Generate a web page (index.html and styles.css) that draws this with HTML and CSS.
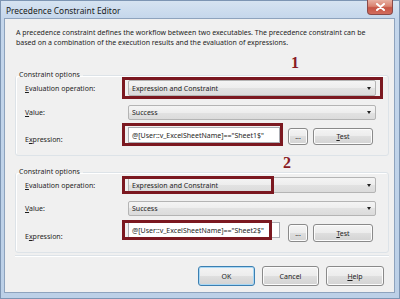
FILE: index.html
```html
<!DOCTYPE html>
<html>
<head>
<meta charset="utf-8">
<link rel="stylesheet" href="styles.css">
</head>
<body>
<div class="window">
  <div class="titlebar">
    <span class="title">Precedence Constraint Editor</span>
    <div class="close"><svg width="9" height="8" viewBox="0 0 9 8"><path d="M1 1 L8 7 M8 1 L1 7" stroke="#fff" stroke-width="2" stroke-linecap="round"/></svg></div>
  </div>
  <div class="client">
    <p class="desc">A precedence constraint defines the workflow between two executables. The precedence constraint can be<br>based on a combination of the execution results and the evaluation of expressions.</p>
    <div class="marker m1">1</div>
    <fieldset class="group">
      <legend>Constraint options</legend>
      <div class="rows">
        <div class="row r1">
          <span class="label"><u>E</u>valuation operation:</span>
          <div class="combo"><span>Expression and Constraint</span><i class="arrow"></i><div class="callout co-eval1"></div></div>
        </div>
        <div class="row r2">
          <span class="label"><u>V</u>alue:</span>
          <div class="combo"><span>Success</span><i class="arrow"></i></div>
        </div>
        <div class="row r3">
          <span class="label lbl-low">E<u>x</u>pression:</span>
          <div class="exprline">
            <div class="textbox">@[User::v_ExcelSheetName]=="Sheet1$"<div class="callout co-expr1"></div></div>
            <button class="btn dots">...</button>
            <button class="btn test"><u>T</u>est</button>
          </div>
        </div>
      </div>
    </fieldset>
    <div class="marker m2">2</div>
    <fieldset class="group g2">
      <legend>Constraint options</legend>
      <div class="rows">
        <div class="row r1">
          <span class="label"><u>E</u>valuation operation:</span>
          <div class="combo"><span>Expression and Constraint</span><i class="arrow"></i><div class="callout co-eval2"></div></div>
        </div>
        <div class="row r2 r2b">
          <span class="label"><u>V</u>alue:</span>
          <div class="combo"><span>Success</span><i class="arrow"></i></div>
        </div>
        <div class="row r3 r3b">
          <span class="label lbl-low">E<u>x</u>pression:</span>
          <div class="exprline">
            <div class="textbox">@[User::v_ExcelSheetName]=="Sheet2$"<div class="callout co-expr2"></div></div>
            <button class="btn dots">...</button>
            <button class="btn test"><u>T</u>est</button>
          </div>
        </div>
      </div>
    </fieldset>
    <div class="separator"></div>
    <div class="actions">
      <button class="btn action default">OK</button>
      <button class="btn action">Cancel</button>
      <button class="btn action help"><u>H</u>elp</button>
    </div>
  </div>
</div>
</body>
</html>
```

FILE: styles.css
```css
* { box-sizing: border-box; }
html, body { margin: 0; padding: 0; }
body { font-family: "Noto Sans", "Open Sans", sans-serif; color: #1e1e1e; }

.window {
  width: 400px;
  height: 299px;
  border: 1px solid #7d95b3;
  background: linear-gradient(#d6e3f1, #c4d6eb 18px, #bcd0e7);
  padding: 0 4px 5px 3px;
  display: flex;
  flex-direction: column;
}

.titlebar {
  height: 17px;
  display: flex;
  align-items: center;
}
.title {
  font-size: 8.4px;
  color: #1b1b1b;
  padding-left: 2px;
  margin-top: 1px;
}
.close {
  margin-left: auto;
  margin-right: 2px;
  align-self: flex-start;
  margin-top: -1px;
  width: 26px;
  height: 15px;
  border: 1px solid #8a4a48;
  border-top: none;
  border-radius: 0 0 4px 4px;
  background: linear-gradient(#e8b0a2, #d98270 45%, #c65444 55%, #d26d5e);
  display: flex;
  align-items: center;
  justify-content: center;
}

.client {
  flex: 1;
  background: #f0f0f0;
  border: 1px solid #8ea3bd;
  padding: 9px 5px 0 10px;
  display: flex;
  flex-direction: column;
  font-size: 7px;
}

.desc {
  margin: 0;
  padding-left: 1px;
  line-height: 10px;
  font-size: 7px;
  white-space: nowrap;
}

.marker {
  font-family: "Liberation Serif", serif;
  font-weight: bold;
  font-size: 16px;
  line-height: 11px;
  height: 11px;
  color: #8a1c24;
}
.m1 { margin-top: 9px; margin-left: 276px; }
.m2 { margin-top: 1px; margin-left: 268px; }

.group {
  margin: 2px 0 0 0;
  padding: 0;
  min-width: 0;
  border: 1px solid #dde3e8;
  border-radius: 3px;
  box-shadow: inset 1px 1px 0 #fff;
}
.g2 { margin-top: -1px; }
.group legend {
  padding: 0 3px;
  margin-left: 0;
  font-size: 7px;
  line-height: 10px;
}
.rows {
  padding: 0 12px 10px 9px;
  display: flex;
  flex-direction: column;
}
.g2 .rows { padding-bottom: 11px; }

.row {
  display: grid;
  grid-template-columns: 103px 1fr;
  align-items: center;
  height: 16px;
}
.r2 { margin-top: 9px; height: 15px; }
.r3 { margin-top: 7px; height: 18px; }
.r2b { margin-top: 8px; }
.r3b { margin-top: 6px; height: 19px; }

.label { white-space: nowrap; }
.lbl-low { align-self: end; line-height: 10px; }

.combo {
  position: relative;
  height: 100%;
  border: 1px solid #b4b4b4;
  border-radius: 2px;
  background: linear-gradient(#f4f4f4, #ededed 50%, #e2e2e2 50%, #dbdbdb);
  display: flex;
  align-items: center;
  padding-left: 3px;
}
.arrow {
  margin-left: auto;
  margin-right: 4px;
  width: 0;
  height: 0;
  border-left: 2.5px solid transparent;
  border-right: 2.5px solid transparent;
  border-top: 3px solid #222;
}

.exprline {
  display: flex;
  align-items: stretch;
  height: 100%;
}
.textbox {
  position: relative;
  width: 152px;
  height: 16px;
  background: #fff;
  border: 1px solid #abadb3;
  display: flex;
  align-items: center;
  padding-left: 3px;
  white-space: nowrap;
  font-size: 7px;
}

.btn {
  font-family: inherit;
  font-size: 7px;
  color: #1e1e1e;
  border: 1px solid #8a8a8a;
  border-radius: 3px;
  background: linear-gradient(#f4f4f4, #ececec 50%, #dfdfdf 50%, #d3d3d3);
  box-shadow: inset 0 0 0 1px #fcfcfc;
  padding: 0;
  margin: 0;
}
.dots { width: 20px; margin-left: 8px; margin-top: 1px; height: 17px; }
.test { width: 60px; margin-left: 5px; margin-top: 1px; height: 17px; }
.r3b .dots, .r3b .test { margin-top: 2px; height: 18px; }

.callout {
  position: absolute;
  border: 3px solid #7b1820;
  pointer-events: none;
}
.co-eval1 { left: -7px; right: -8px; top: -4px; bottom: -4px; }
.co-eval2 { left: -7px; width: 152px; top: -2px; bottom: -2px; }
.co-expr1 { left: -7px; width: 161px; top: -5px; height: 23px; }
.co-expr2 { left: -7px; width: 150px; top: -3px; height: 20px; }

.separator {
  margin-top: 2px;
  height: 2px;
  border-top: 1px solid #dde3e8;
  border-bottom: 1px solid #fff;
}
.actions {
  margin-top: 9px;
  display: flex;
  justify-content: flex-end;
  gap: 7px;
  padding-right: 5px;
}
.action { width: 57px; height: 20px; }
.help { width: 58px; }
.default { border-color: #3c7fb1; box-shadow: inset 0 0 0 1px #a9d8f5; }
```
